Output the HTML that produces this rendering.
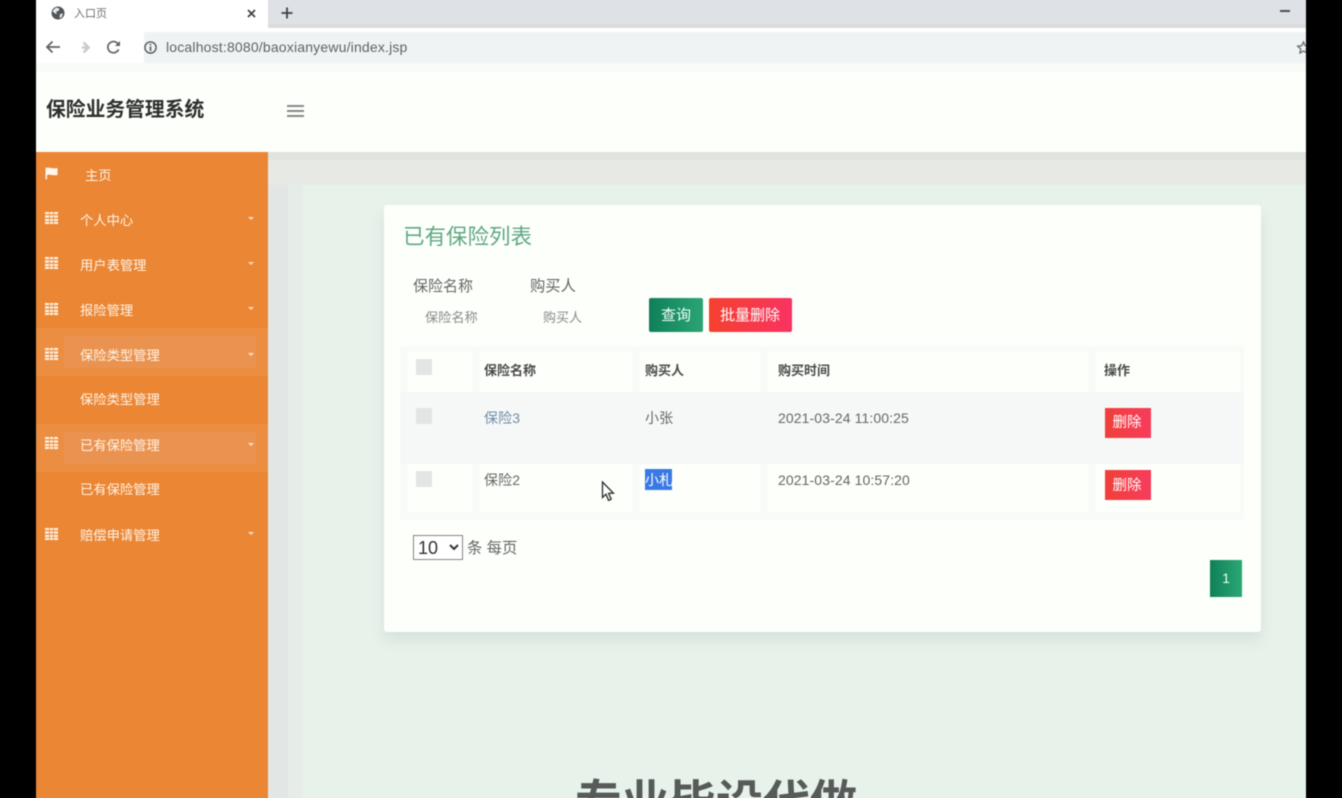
<!DOCTYPE html>
<html lang="zh-CN">
<head>
<meta charset="utf-8">
<title>入口页</title>
<style>
html,body{margin:0;padding:0;width:1342px;height:798px;overflow:hidden;background:#000}
body{position:relative;font-family:"Liberation Sans","Noto Sans CJK SC",sans-serif;color:#555}
#w{position:absolute;left:0;top:0;width:1342px;height:798px;filter:blur(.4px)}
.a{position:absolute;white-space:nowrap}
.t{line-height:1}
svg{position:absolute;overflow:visible}
.nav{color:#fff3e6;font-size:13.3px;line-height:16px;left:80px}
.caret{position:absolute;left:248px;width:0;height:0;border-left:3.5px solid transparent;border-right:3.5px solid transparent;border-top:3.5px solid #fbdcc0}
.ic{position:absolute;left:45px;width:13px;height:12px;background:linear-gradient(90deg,transparent 0 4px,#ee9a55 4px 5px,transparent 5px 8px,#ee9a55 8px 9px,transparent 9px),repeating-linear-gradient(to bottom,#fff3e6 0 2px,#ee9a55 2px 3.4px)}
.cell{position:absolute}
.th{font-size:13px;font-weight:bold;color:#4a4a4a;line-height:16px}
.td{font-size:14px;color:#666;line-height:18px;letter-spacing:.1px}
.cb{position:absolute;left:416px;width:16px;height:16px;background:#e3e4e4}
.del{position:absolute;left:1105px;width:46px;height:30px;background:linear-gradient(90deg,#f0403a,#f83c5c);color:#fff;font-size:14.5px;text-align:center;text-indent:-2px}
</style>
</head>
<body>
<div id="w">
<!-- viewport -->
<div class="a" style="left:36px;top:-6px;width:1270px;height:816px;background:#e7f2eb"></div>
<div class="a" style="left:36px;top:-6px;width:1270px;height:30px;background:#dee1e6"></div>
<div class="a" style="left:36px;top:24px;width:1270px;height:4px;background:#d9dcda"></div>
<div class="a" style="left:36px;top:28px;width:1270px;height:44px;background:#fff"></div>
<div class="a" style="left:36px;top:-6px;width:232px;height:34px;background:#fff"></div>
<div class="a" style="left:144px;top:32px;width:1162px;height:31px;background:#f0f3f3"></div>
<div class="a" style="left:36px;top:63px;width:1270px;height:9px;background:#f9fbf8"></div>

<!-- tab contents -->
<svg style="left:51px;top:6px" width="14" height="14" viewBox="0 0 14 14">
  <circle cx="7" cy="7" r="6.5" fill="#50555a"/>
  <path d="M5 1.5 L8.5 2.5 L7.5 5 L5 5.5 L6 8 L4 7.5 L1.5 5 Z M9 8 L12 7.5 L10.5 11.5 L8.5 12 Z" fill="#e8eaec"/>
</svg>
<div class="a t" style="left:74px;top:9px;font-size:11px;color:#6a6d70">入口页</div>
<svg style="left:247px;top:9px" width="9" height="9" viewBox="0 0 9 9"><path d="M1 1 L8 8 M8 1 L1 8" stroke="#3c4043" stroke-width="1.7"/></svg>
<svg style="left:281px;top:7px" width="12" height="12" viewBox="0 0 12 12"><path d="M6 0.5 V11.5 M0.5 6 H11.5" stroke="#3c4043" stroke-width="1.8"/></svg>
<div class="a" style="left:1280px;top:10px;width:10px;height:1.5px;background:#4c5053"></div>

<!-- toolbar icons -->
<svg style="left:45px;top:40px" width="16" height="14" viewBox="0 0 16 14"><path d="M15 7 H2 M7.5 1.5 L2 7 L7.5 12.5" fill="none" stroke="#5f6368" stroke-width="1.8"/></svg>
<svg style="left:78px;top:41px" width="12" height="13" viewBox="0 0 12 13"><path d="M4 6.5 H10 M5.5 1.5 L10.5 6.5 L5.5 11.5" fill="none" stroke="#c9cbcd" stroke-width="2.6"/></svg>
<svg style="left:106px;top:40px" width="15" height="15" viewBox="0 0 15 15"><path d="M12.6 9.4 A5.6 5.6 0 1 1 11.6 3.4 L13.4 5" fill="none" stroke="#5f6368" stroke-width="1.7"/><path d="M14 1 V6 H9 Z" fill="#5f6368"/></svg>
<svg style="left:144px;top:41px" width="13" height="13" viewBox="0 0 13 13"><circle cx="6.5" cy="6.5" r="5.6" fill="none" stroke="#55595d" stroke-width="1.4"/><path d="M6.5 5.5 V10 M6.5 3 V4.4" stroke="#55595d" stroke-width="1.6"/></svg>
<div class="a" style="left:166px;top:39px;font-size:14px;line-height:17px;color:#5f6368;letter-spacing:.18px">localhost:8080/baoxianyewu/index.jsp</div>
<svg style="left:1297px;top:41px" width="13" height="13" viewBox="0 0 13 13"><path d="M6.5 1 L8.2 4.7 L12.3 5.2 L9.2 8 L10.1 12 L6.5 10 L2.9 12 L3.8 8 L0.7 5.2 L4.8 4.7 Z" fill="none" stroke="#6a6d70" stroke-width="1.3"/></svg>
<div class="a" style="left:1306px;top:-6px;width:42px;height:816px;background:#000"></div>

<!-- header -->
<div class="a" style="left:36px;top:72px;width:1270px;height:80px;background:#fdfffa"></div>
<div class="a t" style="left:46px;top:101px;font-size:19.8px;font-weight:bold;color:#2d2f2e">保险业务管理系统</div>
<div class="a" style="left:287px;top:105px;width:17px;height:2px;background:#858988"></div>
<div class="a" style="left:287px;top:110px;width:17px;height:2px;background:#858988"></div>
<div class="a" style="left:287px;top:115px;width:17px;height:2px;background:#858988"></div>

<!-- content backdrop shading -->
<div class="a" style="left:268px;top:152px;width:1038px;height:8px;background:#dfe4df"></div>
<div class="a" style="left:268px;top:160px;width:1038px;height:25px;background:#e7e9e4"></div>
<div class="a" style="left:268px;top:185px;width:20px;height:625px;background:#e2e7e5"></div>
<div class="a" style="left:288px;top:185px;width:15px;height:625px;background:#e6ede9"></div>

<!-- sidebar -->
<div class="a" style="left:36px;top:152px;width:232px;height:658px;background:#ea8634"></div>
<div class="a" style="left:36px;top:328px;width:232px;height:48px;background:#ec8e42"></div>
<div class="a" style="left:64px;top:336px;width:192px;height:32px;background:#ea9350"></div>
<div class="a" style="left:36px;top:424px;width:232px;height:48px;background:#ec8e42"></div>
<div class="a" style="left:64px;top:432px;width:192px;height:32px;background:#ea9350"></div>

<svg style="left:45px;top:167px" width="13" height="13" viewBox="0 0 13 13"><path d="M0.5 0.5 H2 V12.5 H0.5 Z M2 1 C5 -0.2 7 2.2 12.5 1 V8 C7 9 5 6.8 2 8 Z" fill="#fff6ec"/></svg>
<div class="a nav" style="left:85px;top:168px">主页</div>

<div class="ic" style="top:212px"></div><div class="a nav" style="top:213px">个人中心</div><div class="caret" style="top:217px"></div>
<div class="ic" style="top:257px"></div><div class="a nav" style="top:258px">用户表管理</div><div class="caret" style="top:262px"></div>
<div class="ic" style="top:303px"></div><div class="a nav" style="top:303px">报险管理</div><div class="caret" style="top:307px"></div>
<div class="ic" style="top:348px"></div><div class="a nav" style="top:348px">保险类型管理</div><div class="caret" style="top:353px"></div>
<div class="a nav" style="top:392px">保险类型管理</div>
<div class="ic" style="top:437px"></div><div class="a nav" style="top:438px">已有保险管理</div><div class="caret" style="top:443px"></div>
<div class="a nav" style="top:482px">已有保险管理</div>
<div class="ic" style="top:528px"></div><div class="a nav" style="top:528px">赔偿申请管理</div><div class="caret" style="top:532px"></div>

<!-- card -->
<div class="a" style="left:384px;top:205px;width:877px;height:427px;background:#fdfffb;box-shadow:0 8px 14px rgba(120,130,125,.14);border-radius:3px"></div>
<div class="a t" style="left:403px;top:227px;font-size:21.5px;color:#5fa882">已有保险列表</div>

<div class="a t" style="left:413px;top:279px;font-size:15px;color:#666">保险名称</div>
<div class="a t" style="left:530px;top:279px;font-size:15.3px;color:#666">购买人</div>
<div class="a t" style="left:425px;top:311px;font-size:13.2px;color:#8a8a8a">保险名称</div>
<div class="a t" style="left:543px;top:311px;font-size:13px;color:#8a8a8a">购买人</div>

<div class="a" style="left:649px;top:298px;width:54px;height:34px;border-radius:2px;background:linear-gradient(90deg,#0f7f5b,#2ba574);color:#f2fff8;font-size:15px;line-height:36px;text-align:center">查询</div>
<div class="a" style="left:709px;top:298px;width:83px;height:34px;border-radius:2px;background:linear-gradient(90deg,#f5412f,#f83362);color:#fff;font-size:15px;line-height:36px;text-align:center;text-indent:-1px">批量删除</div>

<!-- table -->
<div class="cell" style="left:400px;top:346px;width:844px;height:174px;background:#f9fbf9"></div>
<div class="cell" style="left:400px;top:392px;width:844px;height:72px;background:#f6f8f8"></div>

<div class="cell" style="left:408px;top:352px;width:64px;height:40px;background:#fdfffb"></div>
<div class="cell" style="left:480px;top:352px;width:152px;height:40px;background:#fdfffb"></div>
<div class="cell" style="left:640px;top:352px;width:120px;height:40px;background:#fdfffb"></div>
<div class="cell" style="left:768px;top:352px;width:320px;height:40px;background:#fdfffb"></div>
<div class="cell" style="left:1096px;top:352px;width:144px;height:40px;background:#fdfffb"></div>

<div class="cell" style="left:408px;top:464px;width:64px;height:48px;background:#fdfffb"></div>
<div class="cell" style="left:480px;top:464px;width:152px;height:48px;background:#fdfffb"></div>
<div class="cell" style="left:640px;top:464px;width:120px;height:48px;background:#fdfffb"></div>
<div class="cell" style="left:768px;top:464px;width:320px;height:48px;background:#fdfffb"></div>
<div class="cell" style="left:1096px;top:464px;width:144px;height:48px;background:#fdfffb"></div>

<div class="cb" style="top:359px"></div>
<div class="cb" style="top:408px"></div>
<div class="cb" style="top:471px"></div>

<div class="a th" style="left:484px;top:363px">保险名称</div>
<div class="a th" style="left:645px;top:363px">购买人</div>
<div class="a th" style="left:778px;top:363px">购买时间</div>
<div class="a th" style="left:1104px;top:363px">操作</div>

<div class="a td" style="left:484px;top:409px;color:#6f8ca6">保险3</div>
<div class="a td" style="left:645px;top:409px">小张</div>
<div class="a td" style="left:778px;top:409px">2021-03-24 11:00:25</div>
<div class="del" style="top:408px;line-height:31px">删除</div>

<div class="a td" style="left:484px;top:471px">保险2</div>
<div class="a" style="left:645px;top:469px;width:27px;height:21px;background:#3a78e6"></div>
<div class="a td" style="left:645px;top:471px;color:#fff">小札</div>
<div class="a td" style="left:778px;top:471px">2021-03-24 10:57:20</div>
<div class="del" style="top:470px;line-height:32px">删除</div>

<!-- cursor -->
<svg style="left:601px;top:481px" width="14" height="21" viewBox="0 0 14 21"><path d="M1.5 1 V16.5 L5 13.2 L7.6 19.4 L10.2 18.2 L7.6 12.4 L12.4 12.2 Z" fill="#fff" stroke="#2b2b2b" stroke-width="1.3"/></svg>

<!-- page size -->
<select class="a" style="left:413px;top:535px;width:50px;height:25px;font-family:'Liberation Sans',sans-serif;font-size:18px;color:#333;background:#fff;border:1px solid #858585;padding:0;margin:0;border-radius:0"><option>10</option></select>
<div class="a t" style="left:467px;top:541px;font-size:15.4px;color:#666">条 每页</div>

<div class="a" style="left:1210px;top:560px;width:32px;height:37px;background:linear-gradient(90deg,#0f8058,#2ba874);color:#eafff5;font-size:14px;line-height:37px;text-align:center">1</div>

<!-- big heading cut off at the bottom -->
<div class="a t" style="left:575px;top:779px;font-size:47px;font-weight:bold;color:#565a58">专业毕设代做</div>
</div>
</body>
</html>
